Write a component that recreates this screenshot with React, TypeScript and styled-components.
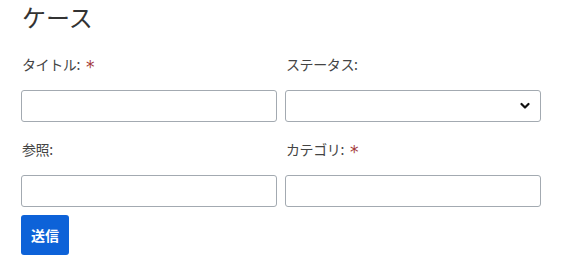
import React from 'react';
import styled, { createGlobalStyle } from 'styled-components';

const GlobalStyle = createGlobalStyle`
  body {
    margin: 0;
    background: #ffffff;
    font-family: 'Noto Sans CJK JP', 'Noto Sans', sans-serif;
    color: #333;
  }
`;

const Page = styled.div`
  padding: 0 21px;
  width: 520px;
`;

const Title = styled.h1`
  font-size: 24px;
  font-weight: 400;
  line-height: 34px;
  margin: 0 0 20px 1px;
  color: #333;
`;

const Grid = styled.div`
  display: grid;
  grid-template-columns: 1fr 1fr;
  column-gap: 8px;
  row-gap: 17px;
`;

const Field = styled.div`
  display: flex;
  flex-direction: column;
`;

const Label = styled.label`
  font-size: 14px;
  line-height: 20px;
  color: #444;
  margin: 0 0 16px 1px;
  display: flex;
  align-items: center;
  letter-spacing: -0.4px;
`;

const Required = styled.span`
  color: #a33a3a;
  font-family: 'DejaVu Sans', sans-serif;
  font-size: 17px;
  font-weight: 400;
  margin-left: 6px;
  line-height: 20px;
  position: relative;
  top: 3px;
`;

const Input = styled.input`
  box-sizing: border-box;
  height: 32px;
  width: 100%;
  border: 1px solid #a3aab1;
  border-radius: 3px;
  padding: 0 8px;
  font-size: 14px;
  background: #fff;
`;

const SelectWrap = styled.div`
  position: relative;
`;

const Select = styled.select`
  box-sizing: border-box;
  height: 32px;
  width: 100%;
  border: 1px solid #a3aab1;
  border-radius: 3px;
  padding: 0 8px;
  font-size: 14px;
  background: #fff;
  appearance: none;
`;

const Chevron = styled.svg`
  position: absolute;
  right: 11px;
  top: 12px;
  pointer-events: none;
`;

const Button = styled.button`
  margin-top: 8px;
  height: 40px;
  padding: 0 10px;
  background: #0d62d8;
  color: #fff;
  border: none;
  border-radius: 3px;
  font-family: 'Noto Sans CJK JP', sans-serif;
  font-size: 14px;
  font-weight: 700;
`;

export default function App() {
  return (
    <>
      <GlobalStyle />
      <Page>
        <Title>ケース</Title>
        <Grid>
          <Field>
            <Label>
              タイトル:<Required>*</Required>
            </Label>
            <Input type="text" />
          </Field>
          <Field>
            <Label>ステータス:</Label>
            <SelectWrap>
              <Select>
                <option value=""></option>
              </Select>
              <Chevron width="10" height="8" viewBox="0 0 10 8">
                <path d="M1.5 2 L5 5.5 L8.5 2" fill="none" stroke="#111" strokeWidth="2.2" strokeLinecap="round" strokeLinejoin="round" />
              </Chevron>
            </SelectWrap>
          </Field>
          <Field>
            <Label>参照:</Label>
            <Input type="text" />
          </Field>
          <Field>
            <Label>
              カテゴリ:<Required>*</Required>
            </Label>
            <Input type="text" />
          </Field>
        </Grid>
        <Button>送信</Button>
      </Page>
    </>
  );
}
